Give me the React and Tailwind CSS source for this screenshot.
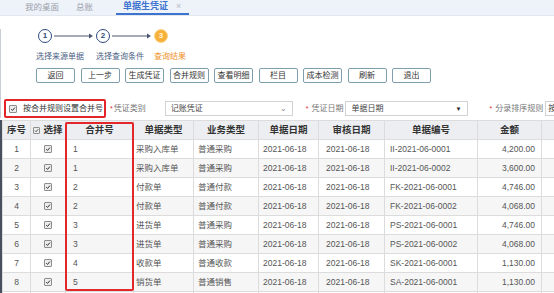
import React from 'react';

const rows = [
    ['1', '1', '采购入库单', '普通采购', '2021-06-18', '2021-06-18', 'II-2021-06-0001', '4,200.00'],
    ['2', '1', '采购入库单', '普通采购', '2021-06-18', '2021-06-18', 'II-2021-06-0002', '3,600.00'],
    ['3', '2', '付款单', '普通付款', '2021-06-18', '2021-06-18', 'FK-2021-06-0001', '4,746.00'],
    ['4', '2', '付款单', '普通付款', '2021-06-18', '2021-06-18', 'FK-2021-06-0002', '4,068.00'],
    ['5', '3', '进货单', '普通采购', '2021-06-18', '2021-06-18', 'PS-2021-06-0001', '4,746.00'],
    ['6', '3', '进货单', '普通采购', '2021-06-18', '2021-06-18', 'PS-2021-06-0002', '4,068.00'],
    ['7', '4', '收款单', '普通收款', '2021-06-18', '2021-06-18', 'SK-2021-06-0001', '1,130.00'],
    ['8', '5', '销货单', '普通销售', '2021-06-18', '2021-06-18', 'SA-2021-06-0001', '1,130.00'],
];

const buttons = ['返回', '上一步', '生成凭证', '合并规则', '查看明细', '栏目', '成本检测', '刷新', '退出'];

function Check({ size = 8 }) {
    return (
        <span
            className="inline-flex shrink-0 items-center justify-center border border-[#8d8d8d] bg-[#ececec] rounded-[1px]"
            style={{ width: size, height: size }}
        >
            <svg viewBox="0 0 10 10" className="w-full h-full">
                <path d="M2 5.2 L4.2 7.4 L8.2 2.6" fill="none" stroke="#2b2b2b" strokeWidth="1.6" />
            </svg>
        </span>
    );
}

function StepCircle({ n, active }) {
    if (active) {
        return (
            <span className="w-[14px] h-[14px] shrink-0 rounded-full bg-[#f7b13a] border-[1.5px] border-[#fcd58a] flex items-center justify-center text-[8px] leading-none text-[#fff3d6] font-bold">
                {n}
            </span>
        );
    }
    return (
        <span className="w-[14px] h-[14px] shrink-0 rounded-full border-[1.5px] border-[#2f4a7c] bg-white flex items-center justify-center text-[8px] leading-none text-[#2f4a7c] font-bold">
            {n}
        </span>
    );
}

function Arrow() {
    return (
        <svg width="44" height="14" viewBox="0 0 44 14" className="shrink-0">
            <line x1="2" y1="7" x2="38" y2="7" stroke="#4a5670" strokeWidth="1" />
            <path d="M37 4.5 L41 7 L37 9.5 Z" fill="#4a5670" />
        </svg>
    );
}

export default function App() {
    const cellBase = 'border border-[#dcdcdc] h-[19px] p-0 whitespace-nowrap overflow-hidden';

    return (
        <div
            className="w-[554px] h-[293px] overflow-hidden bg-white text-[#333]"
            style={{ fontFamily: '"Liberation Sans", "Noto Sans CJK SC", sans-serif' }}
        >
            {/* tab bar */}
            <div className="h-[16px] bg-[#eef2f9] border-b border-[#e2e7ef] flex items-end text-[8.5px] leading-none whitespace-nowrap">
                <div className="ml-[25px] mb-[4px] text-[#9aa0aa]">我的桌面</div>
                <div className="ml-[17px] mb-[4px] text-[#9aa0aa]">总账</div>
                <div className="ml-[23px] w-[73px] h-[16px] flex items-center border-b-2 border-[#3b73cf]">
                    <span className="ml-[7px] text-[#3b73cf] font-bold text-[9px]">单据生凭证</span>
                    <span className="ml-[8px] text-[#b5bac2] text-[9px]">×</span>
                </div>
            </div>

            <div className="border-l border-[#c9ced8]">
                {/* steps */}
                <div className="flex items-center ml-[37px] mt-[13px]">
                    <StepCircle n="1" />
                    <Arrow />
                    <StepCircle n="2" />
                    <Arrow />
                    <StepCircle n="3" active />
                </div>
                <div className="flex ml-[35px] mt-[9px] text-[8px] leading-[10px] whitespace-nowrap">
                    <span className="w-[60px] text-[#4d5f85]">选择来源单据</span>
                    <span className="w-[58px] text-[#4d5f85]">选择查询条件</span>
                    <span className="text-[#f0922b]">查询结果</span>
                </div>

                {/* buttons */}
                <div className="flex ml-[35px] mt-[6px] gap-[5.5px]">
                    {buttons.map((b) => (
                        <button
                            key={b}
                            className="w-[39px] h-[15px] shrink-0 border border-[#7f9eae] rounded-[2px] bg-white text-[8px] leading-none text-[#333] flex items-center justify-center whitespace-nowrap"
                        >
                            {b}
                        </button>
                    ))}
                </div>

                {/* filters */}
                <div className="flex items-center mt-[16px] h-[19px] text-[8px] leading-none whitespace-nowrap">
                    <div className="ml-[3px] w-[102px] shrink-0 h-[19px] border-2 border-[#e3262a] rounded-[2px] flex items-center">
                        <span className="ml-[3px] flex"><Check size={8} /></span>
                        <span className="ml-[6px] text-[#333]">按合并规则设置合并号</span>
                    </div>
                    <span className="ml-[4px] shrink-0 text-[#e3262a] text-[7px]">*</span>
                    <span className="ml-[1px] shrink-0 text-[#777]">凭证类别</span>
                    <div className="ml-[19px] w-[128px] shrink-0 h-[15px] border border-[#d2d2d2] flex items-center justify-between">
                        <span className="ml-[5px] text-[#444]">记账凭证</span>
                        <span className="mr-[5px] text-[#888] text-[8px]">⌄</span>
                    </div>
                    <span className="ml-[13px] shrink-0 text-[#e3262a] text-[7px]">*</span>
                    <span className="ml-[3px] shrink-0 text-[#777]">凭证日期</span>
                    <div className="ml-[2px] w-[123px] shrink-0 h-[15px] border border-[#d2d2d2] flex items-center justify-between">
                        <span className="ml-[5px] text-[#444]">单据日期</span>
                        <span className="mr-[6px] text-[#222] text-[6px]">▼</span>
                    </div>
                    <span className="ml-[21px] shrink-0 text-[#e3262a] text-[7px]">*</span>
                    <span className="ml-[3px] shrink-0 text-[#777]">分录排序规则</span>
                    <div className="ml-[2px] w-[60px] h-[15px] border border-[#d2d2d2] flex items-center shrink-0">
                        <span className="ml-[2px] text-[#444]">按单据</span>
                    </div>
                </div>
            </div>

            {/* table */}
            <div className="relative mt-[2px] w-[554px] overflow-hidden border-l-2 border-[#46505f]">
                <table className="table-fixed border-collapse w-[600px] text-[8.5px]">
                    <colgroup>
                        <col className="w-[28px]" />
                        <col className="w-[35px]" />
                        <col className="w-[68px]" />
                        <col className="w-[60px]" />
                        <col className="w-[65px]" />
                        <col className="w-[60px]" />
                        <col className="w-[66px]" />
                        <col className="w-[93px]" />
                        <col className="w-[64px]" />
                        <col className="w-[61px]" />
                    </colgroup>
                    <thead>
                        <tr className="bg-[#eceef1] text-[9.5px] font-bold text-[#333]">
                            <th className={`${cellBase} h-[18px]`}>序号</th>
                            <th className={`${cellBase} h-[18px]`}>
                                <span className="inline-flex items-center gap-[3px]">
                                    <Check size={7} />
                                    选择
                                </span>
                            </th>
                            <th className={`${cellBase} h-[18px]`}>合并号</th>
                            <th className={`${cellBase} h-[18px]`}>单据类型</th>
                            <th className={`${cellBase} h-[18px]`}>业务类型</th>
                            <th className={`${cellBase} h-[18px]`}>单据日期</th>
                            <th className={`${cellBase} h-[18px]`}>审核日期</th>
                            <th className={`${cellBase} h-[18px]`}>单据编号</th>
                            <th className={`${cellBase} h-[18px]`}>金额</th>
                            <th className={`${cellBase} h-[18px]`}></th>
                        </tr>
                    </thead>
                    <tbody className="text-[#555]">
                        {rows.map((r, i) => (
                            <tr key={r[0]} className={i % 2 === 1 ? 'bg-[#f6f6f6]' : 'bg-white'}>
                                <td className={`${cellBase} text-center`}>{r[0]}</td>
                                <td className={`${cellBase} text-center`}>
                                    <span className="inline-flex align-middle"><Check size={8} /></span>
                                </td>
                                <td className={`${cellBase} pl-[7px]`}>{r[1]}</td>
                                <td className={`${cellBase} pl-[2px]`}>{r[2]}</td>
                                <td className={`${cellBase} pl-[4px]`}>{r[3]}</td>
                                <td className={`${cellBase} pl-[4px]`}>{r[4]}</td>
                                <td className={`${cellBase} pl-[7px]`}>{r[5]}</td>
                                <td className={`${cellBase} pl-[5px]`}>{r[6]}</td>
                                <td className={`${cellBase} text-right pr-[6px]`}>{r[7]}</td>
                                <td className={cellBase}></td>
                            </tr>
                        ))}
                        <tr className="bg-white">
                            {Array.from({ length: 10 }).map((_, k) => (
                                <td key={k} className={cellBase}></td>
                            ))}
                        </tr>
                    </tbody>
                </table>
                {/* highlight around merge column */}
                <div className="absolute left-[63px] top-[2px] w-[69px] h-[169px] border-2 border-[#e3262a] rounded-[2px] pointer-events-none" />
            </div>
        </div>
    );
}
